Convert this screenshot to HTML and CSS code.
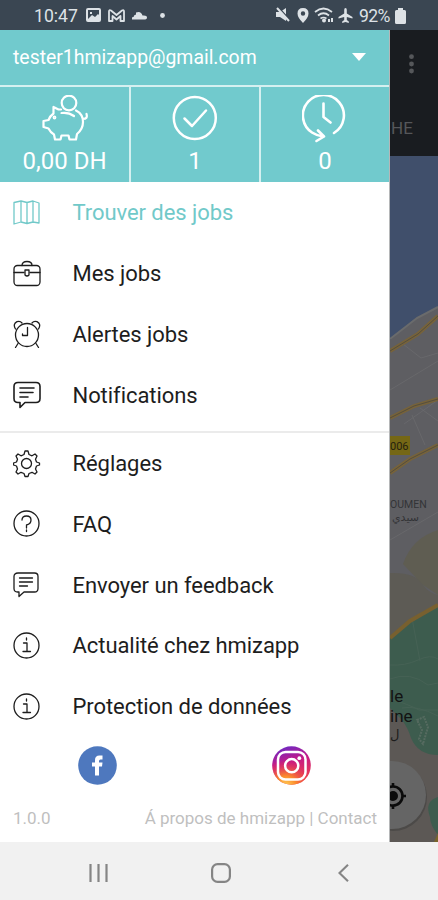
FILE: index.html
```html
<!DOCTYPE html>
<html lang="fr">
<head>
<meta charset="utf-8">
<title>hmizapp</title>
<link rel="stylesheet" href="styles.css">
</head>
<body>
<div class="phone">
  <header class="status">
    <span class="clock">10:47</span>
    <svg class="status-left" width="84" height="18" viewBox="0 0 84 18">
      <path fill="#dde2e6" fill-rule="evenodd" d="M2 1h11q2 0 2 2v10q0 2-2 2H2q-2 0-2-2V3q0-2 2-2zm0 2v9l4-4 3 2 3-3 1 1V3zM4 5h2v2H4z"/>
      <path fill="none" stroke="#dde2e6" stroke-width="1.800" stroke-linejoin="round" d="M23 14V4.500q0-2 2-1l5.500 4.500L36 3.500q2-1 2 1V14h-3.500V9l-4 3.500-4-3.500v5z"/>
      <path fill="#dde2e6" d="M46 12.500v-2l2-1v3zm2 0v-4l2-1v5zm2 0V5.500q5-2 6.500 3 4.500-.5 4.500 2 0 2-3 2z"/>
      <circle cx="76.500" cy="8.500" r="2.400" fill="#dde2e6"/>
    </svg>
    <svg class="status-right" width="78" height="18" viewBox="0 0 78 18">
      <g fill="#dde2e6">
        <path d="M0 5h4l6-4v13l-6-4H0z"/><path d="M27 1q-5.500 0-5.500 5.500 0 4 5.500 9.500 5.500-5.500 5.500-9.500Q32.500 1 27 1zm0 3.300a2.200 2.200 0 1 1 0 4.400 2.200 2.200 0 0 1 0-4.400z" fill-rule="evenodd"/>
        <path d="M69.500 1q-1.300 0-1.300 2v3.500L62.500 10v1.500l5.700-1.500v3l-2 1.500V16l3.300-1 3.300 1v-1.500l-2-1.500v-3l5.700 1.500V10l-5.700-3.500V3q0-2-1.300-2z"/>
        <circle cx="48" cy="13.500" r="2"/><path d="M52 12h2v3h-2zm3-1h2v4h-2z"/>
      </g>
      <path d="m2 0 13 14" stroke="#3a4652" stroke-width="1.500"/><path d="m1 1 12 13" stroke="#dde2e6" stroke-width="2"/>
      <path d="M39 5q8.500-7 17 0M42 8.500q5.500-4.500 11 0M44.500 11.500q3-2 6 0" fill="none" stroke="#dde2e6" stroke-width="1.700"/>
    </svg>
    <span class="percent">92%</span>
    <svg width="11" height="16" viewBox="0 0 11 16"><path fill="#dde2e6" d="M3 0h5v2h1.500q1.500 0 1.500 1.500v11q0 1.500-1.500 1.500h-8Q0 16 0 14.500v-11Q0 2 1.500 2H3z"/></svg>
  </header>

  <div class="main">
    <nav class="drawer">
      <div class="account"><span class="mail">tester1hmizapp@gmail.com</span><i class="caret"></i></div>
      <div class="stats">
        <div class="stat">
          <svg width="46" height="48" viewBox="0 0 46 48" fill="none" stroke="#fff" stroke-width="2.200" stroke-linejoin="round" stroke-linecap="round">
            <circle cx="27" cy="8" r="7.300"/>
            <path d="M19 14.500h-2.500L11.500 12v6.500Q8 21 6.500 25l-5 1v6l5 1.500q2 4 5.500 6l1 5h5.500l1-4h7l1 4H34l1-5.500q6-5 6-12 0-8-7-11.500M41 24q5 0 3.500-5"/>
            <path d="M19.500 18q7-1 12.500 3"/><circle cx="12.500" cy="22.500" r=".8"/>
          </svg><span>0,00 DH</span>
        </div>
        <div class="stat">
          <svg width="46" height="48" viewBox="0 0 46 48" fill="none" stroke="#fff" stroke-width="2.500" stroke-linecap="round" stroke-linejoin="round"><circle cx="22.800" cy="23" r="21"/><path d="m12.500 23.500 7.500 7.500L34 15.500"/></svg><span>1</span>
        </div>
        <div class="stat">
          <svg width="46" height="48" viewBox="0 0 46 48" fill="none" stroke="#fff" stroke-width="2.600" stroke-linecap="round" stroke-linejoin="round"><path d="M32 38A20.500 20.500 0 1 0 10 37.500q4.500 3 11 4M16 35.500l6 6-7.500 4.500M21.500 8.500v13.500l7 5.500"/></svg><span>0</span>
        </div>
      </div>

      <ul class="menu">
        <li class="active"><svg class="ico" viewBox="0 0 28 28"><path d="M1 3.500 8 2l6 1.500L20 2l6 2v20l-6-1-6 1.500L8 23l-7 2zM8 2v21m6-19.500v21M20 2v21"/></svg><span>Trouver des jobs</span></li>
        <li><svg class="ico" viewBox="0 0 28 28"><rect x="1" y="5.500" width="26" height="20" rx="3.500"/><path d="M9 5.500q0-4 5-4t5 4M1 12.500h10m6 0h10"/><path d="M12 10h4v5q-2 2-4 0z"/></svg><span>Mes jobs</span></li>
        <li><svg class="ico" viewBox="0 0 28 28"><circle cx="14" cy="15" r="11.500"/><path d="M2.500 9Q-.5 4 4 1.700 7 .5 9 3M25.500 9q3-5-1.500-7.300-3-1.200-5 1.300M5 23.500l-2.500 4m20.500-4 2.500 4"/><path d="M14.500 7.500v8H9.500v-1.500"/></svg><span>Alertes jobs</span></li>
        <li><svg class="ico bold" viewBox="0 0 28 28"><path d="M5 1.500h18q4 0 4 4v12q0 4-4 4H12l-5 5v-5H5q-4 0-4-4v-12q0-4 4-4zM7 7h14M7 11.500h13M7 16h8"/></svg><span>Notifications</span></li>
      </ul>
      <ul class="menu second">
        <li><svg class="ico" viewBox="0 0 28 28"><circle cx="13.500" cy="13.500" r="5"/><path d="M11 4.500 12 1h3l1 3.500 3 1.300L22 4l2 2-1.500 3.300L23.500 12l3 1v2l-3 1-1 3L24 22l-2 2-3-1.700-3 1.200-1 3h-3l-1-3-3-1.200L5 24l-2-2 1.500-3-1-3-3-1v-2l3-1 1-2.700L3 6l2-2 3 1.800z"/></svg><span>Réglages</span></li>
        <li><svg class="ico" viewBox="0 0 28 28"><circle cx="13.500" cy="13.500" r="12.500"/><path d="M9 10q0-4 4.500-4t4.500 4-4.500 5v3m0 2v1.500"/></svg><span>FAQ</span></li>
        <li><svg class="ico" viewBox="0 0 28 28"><path d="M5 2h16.500Q25 2 25 5.500v12q0 3.500-3.500 3.500H11l-5 4.500V21H4.500Q1 21 1 17.500v-12Q1 2 5 2zM6.500 7h13M6.500 11h13M6.500 15h8"/></svg><span>Envoyer un feedback</span></li>
        <li><svg class="ico" viewBox="0 0 28 28"><circle cx="13.500" cy="13.500" r="12.500"/><path d="M10.500 11h3.500v8.500m-4 0h7.500M13.500 6v2"/></svg><span>Actualité chez hmizapp</span></li>
        <li><svg class="ico" viewBox="0 0 28 28"><circle cx="13.500" cy="13.500" r="12.500"/><path d="M10.500 11h3.500v8.500m-4 0h7.500M13.500 6v2"/></svg><span>Protection de données</span></li>
      </ul>

      <div class="social">
        <svg width="39" height="39" viewBox="0 0 39 39"><circle cx="19.500" cy="19.500" r="19.300" fill="#4e78be"/><path fill="#fff" d="M17 29.500v-9h-3v-4h3v-2.500q0-4.500 4.500-4.500h3v4h-2q-1.500 0-1.500 1.500v1.500h3.500l-.5 4h-3v9z"/></svg>
        <svg width="39" height="39" viewBox="0 0 39 39">
          <defs>
            <linearGradient id="violet" x1="0" y1="0" x2=".3" y2="1"><stop offset="0" stop-color="#5b2bd0"/><stop offset=".5" stop-color="#c71a85"/><stop offset="1" stop-color="#ec3d4e"/></linearGradient>
            <radialGradient id="amber" cx=".35" cy="1.050" r=".7"><stop offset="0" stop-color="#ffd85a"/><stop offset=".4" stop-color="#fb8a2c"/><stop offset="1" stop-color="#e8304f" stop-opacity="0"/></radialGradient>
          </defs>
          <circle cx="19.500" cy="19.500" r="19.300" fill="url(#violet)"/><circle cx="19.500" cy="19.500" r="19.300" fill="url(#amber)"/>
          <g fill="none" stroke="#fff" stroke-width="2.500"><rect x="6" y="6" width="27.500" height="27.500" rx="7.500"/><circle cx="19.700" cy="19.700" r="6.600"/></g><circle cx="27.300" cy="12.200" r="1.900" fill="#fff"/>
        </svg>
      </div>
      <footer class="foot"><span class="version">1.0.0</span><span class="links">Á propos de hmizapp | Contact</span></footer>
    </nav>

    <aside class="behind">
      <div class="appbar">
        <svg width="5" height="20" viewBox="0 0 5 20" fill="#55575a"><circle cx="2.500" cy="2.700" r="2.400"/><circle cx="2.500" cy="10" r="2.400"/><circle cx="2.500" cy="17" r="2.400"/></svg>
        <span>HE</span>
      </div>
      <svg class="map" width="48" height="686" viewBox="0 156 48 686">
        <path fill="#5e5e62" d="M0 156h48v686H0z"/>
        <path fill="#404f6b" d="M0 156h48v151L27 317 0 340z"/>
        <path fill="none" stroke="#6a6b6c" stroke-width="2" d="M0 339 27 318l21-11"/>
        <path fill="none" stroke="#68686b" d="m13 344 18 14 17-5M0 390l48-29M22 415l13 30M14 424l34-24M30 408l18 13M0 540l48-28"/>
        <path fill="none" stroke="#77633a" stroke-width="4" d="m0 351 28-17 20-18M0 418l24-12 24-7M0 473l20-14 28-14"/>
        <path fill="none" stroke="#4d493f" stroke-width=".8" d="m0 351 28-17 20-18M0 418l24-12 24-7M0 473l20-14 28-14"/>
        <path fill="#5d5b55" d="M0 573q26-1 33 12 6 8 15 10v25L0 637z"/>
        <path fill="#5f5d52" d="M48 530q-26 8-35 34l20 21 15 10z"/>
        <path fill="#5c5855" d="M0 640h48v202H0z"/>
        <path fill="#3d5c4e" d="M0 638 25 618l23-11v148q-20 0-27-17-3-10-9-18L0 708z"/>
        <path fill="none" stroke="#466255" d="M0 665q15 1 28-5t20-1M0 679q20-8 38 6l10-2M22 618l8 43M0 699q18 5 29 11h19M12 708q15-3 36 8"/>
        <path fill="none" stroke="#566b60" stroke-width="2" stroke-dasharray="2 1" d="m27 720 7-3 4 10-5 17-4-5 3-9z"/>
        <path fill="none" stroke="#78602f" stroke-width="4" d="m0 638 20-17 28-16"/>
        <path fill="#3d5c4e" d="M48 797q-14 4-8 20 0 8 8 18z"/>
        <path fill="#77652c" d="m44 842 4-9v9z"/>
        <path fill="#756715" d="M0 436h20v19H0z"/>
        <text x="0" y="450" class="road">006</text>
        <text x="0" y="508" class="place">OUMEN</text>
        <text x="2" y="521" class="arabic">سيدي</text>
        <text x="0" y="702" class="town">le</text>
        <text x="0" y="722" class="town">ine</text>
        <text x="0" y="739" class="townar">ل</text>
        <circle cx="3" cy="797" r="34" fill="#4c4a48"/><circle cx="2" cy="795" r="34" fill="#656565"/>
        <g fill="none" stroke="#0b0b0b" stroke-width="2.600"><circle cx="3" cy="796" r="9.500"/><path d="M3 783v4m0 18v4m9-13h4"/></g><circle cx="3" cy="796" r="5" fill="#0b0b0b"/>
      </svg>
    </aside>
  </div>

  <div class="navbar">
    <svg width="19" height="18" viewBox="0 0 19 18" stroke="#858585" stroke-width="2.200"><path d="M1.500 0v18m8-18v18m8-18v18"/></svg>
    <svg class="home" width="20" height="20" viewBox="0 0 20 20" fill="none" stroke="#858585" stroke-width="2.200"><rect x="1.100" y="1.100" width="17.800" height="17.800" rx="5.500"/></svg>
    <svg width="11" height="18" viewBox="0 0 11 18" fill="none" stroke="#858585" stroke-width="2.100"><path d="M10 .8 1.500 9l8.500 8.200"/></svg>
  </div>
</div>
</body>
</html>
```
FILE: styles.css
```css
* { box-sizing: border-box; }
body { margin: 0; font-family: Roboto, "Noto Sans", sans-serif; }
svg { display: block; flex: none; }
ul { list-style: none; margin: 0; padding: 0; }
.phone { width: 438px; height: 900px; display: flex; flex-direction: column; overflow: hidden; background: #fff; }
.status { height: 30px; flex: none; display: flex; align-items: center; padding: 1px 0 0 34px; background: #3a4652; color: #dde2e6; font-size: 17.6px; white-space: nowrap; }
.clock { width: 52px; }
.status-right { margin-left: 106px; }
.percent { width: 36px; margin-left: 5px; letter-spacing: -0.6px; }
.main { height: 812px; flex: none; display: flex; }
.drawer { width: 390px; flex: none; display: flex; flex-direction: column; background: #fff; border-right: 1px solid #b5b7b8; }
.account { height: 54.5px; flex: none; display: flex; align-items: center; justify-content: space-between; padding: 0 23px 0 13px; background: #71cacd; color: #fff; font-size: 19.4px; }
.caret { border: 7px solid transparent; border-top: 8px solid #fff; border-bottom: 0; }
.stats { height: 97px; flex: none; display: grid; grid-template-columns: 129px 130px 1fr; background: #71cacd; border-top: 2px solid #d5f0f0; }
.stat { display: flex; flex-direction: column; align-items: center; padding-top: 8px; color: #fff; font-size: 24px; line-height: 28px; gap: 4px; }
.stat + .stat { border-left: 2px solid #d5f0f0; }
.menu { flex: none; padding: 1px 0 5.5px; }
.menu li { height: 60.8px; display: flex; align-items: center; gap: 31.5px; padding-left: 13px; color: #1d1d1d; font-size: 22px; letter-spacing: -0.06px; }
.menu .active { color: #71c9c9; }
.second { border-top: 2px solid #ebebeb; padding: 0; }
.ico { width: 28px; height: 28px; fill: none; stroke: currentColor; stroke-width: 1.3; stroke-linecap: round; stroke-linejoin: round; }
.bold { stroke-width: 1.6; }
.social { height: 56px; flex: none; display: flex; align-items: center; justify-content: space-around; }
.foot { display: flex; justify-content: space-between; padding: 15px 12px 0 13px; color: #bfbfbf; font-size: 17px; line-height: 20px; }
.behind { width: 48px; }
.appbar { height: 126px; background: #191c20; color: #55575a; padding: 24px 0 0 19px; font-size: 17px; }
.appbar span { display: block; margin: 44px 0 0 -18px; }
.map { overflow: hidden; }
.road { font-size: 11px; fill: #25220f; }
.place { font-size: 10.5px; fill: #333437; }
.arabic { font: 11px "DejaVu Sans", sans-serif; fill: #333437; }
.town { font-size: 17px; fill: #121212; }
.townar { font: 13px "DejaVu Sans", sans-serif; fill: #1c1c1c; }
.navbar { height: 58px; flex: none; display: flex; justify-content: space-between; align-items: center; padding: 3px 89px 0 89px; background: #f1f1f1; }
.home { margin-right: 5px; }
```
